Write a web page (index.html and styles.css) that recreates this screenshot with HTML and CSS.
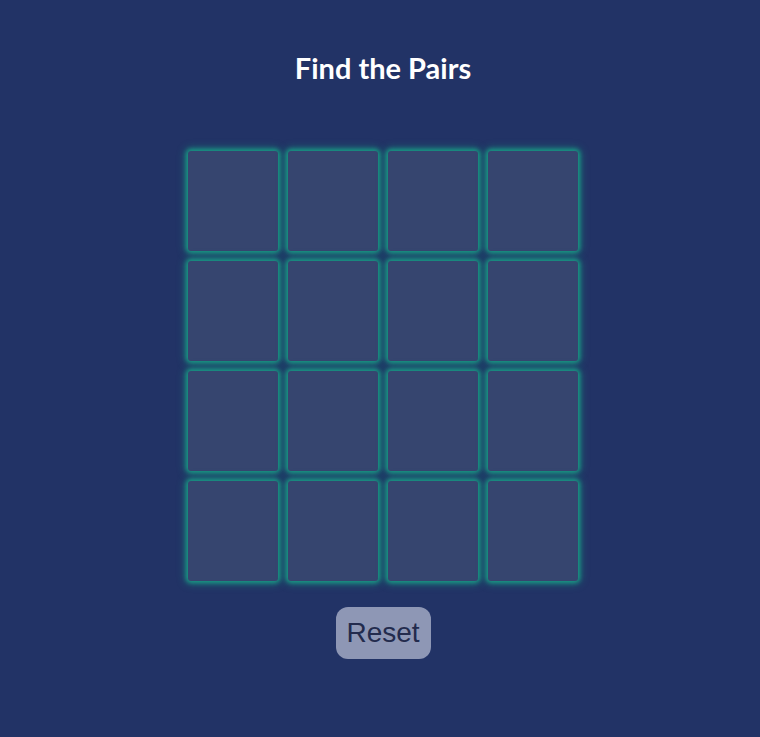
FILE: index.html
```html
<!DOCTYPE html>
<html>
<head>
<meta charset="utf-8">
<link rel="stylesheet" href="styles.css">
</head>
<body>
<main class="app">
  <h1 class="title">Find the Pairs</h1>
  <div class="board">
    <div class="card"></div><div class="card"></div><div class="card"></div><div class="card"></div>
    <div class="card"></div><div class="card"></div><div class="card"></div><div class="card"></div>
    <div class="card"></div><div class="card"></div><div class="card"></div><div class="card"></div>
    <div class="card"></div><div class="card"></div><div class="card"></div><div class="card"></div>
  </div>
  <button class="reset">Reset</button>
</main>
</body>
</html>
```
FILE: styles.css
```css
html, body {
  margin: 0;
  padding: 0;
  background: #223366;
  height: 100%;
}
.app {
  display: flex;
  flex-direction: column;
  align-items: center;
  padding-top: 51px;
  padding-left: 6px;
}
.title {
  margin: 0;
  font-family: Lato, "Open Sans", sans-serif;
  font-weight: 700;
  font-size: 29px;
  line-height: 34px;
  color: #ffffff;
}
.board {
  margin-top: 66px;
  display: grid;
  grid-template-columns: repeat(4, 90px);
  grid-auto-rows: 100px;
  gap: 10px;
}
.card {
  background: #36456f;
  border-radius: 3px;
  box-shadow: 0 0 4px 2px rgba(24, 160, 134, 0.9), 0 0 9px 3px rgba(24, 160, 134, 0.45);
}
.reset {
  margin-top: 26px;
  width: 95px;
  height: 52px;
  border: none;
  border-radius: 12px;
  background: #8e97b5;
  color: #232b4d;
  font-family: "Liberation Sans", Arial, sans-serif;
  font-size: 28px;
  padding: 0;
}
```
